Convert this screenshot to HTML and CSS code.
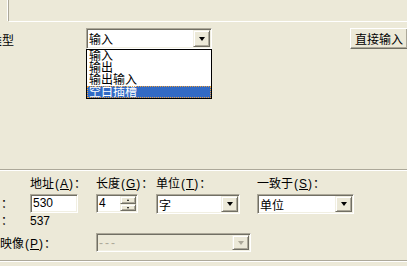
FILE: index.html
```html
<!DOCTYPE html>
<html lang="zh-CN">
<head>
<meta charset="utf-8">
<title>插槽属性</title>
<link rel="stylesheet" href="styles.css">
</head>
<body>
<div class="tabs"><div class="tab"></div><div class="tabline"></div></div>

<div class="row-type">
  <span class="lbl-type">类型</span>
  <div class="combo combo-type">
    <span class="combo-text">输入</span>
    <span class="dd-btn"><span class="arrow"></span></span>
    <ul class="dd-list">
      <li>输入</li>
      <li>输出</li>
      <li>输出输入</li>
      <li class="sel">空白插槽</li>
    </ul>
  </div>
  <div class="btn btn-direct">直接输入</div>
</div>

<div class="sep sep-mid"></div>

<div class="fields">
  <span></span>
  <span class="hdr">地址<span class="mn">(<u>A</u>)</span>：</span>
  <span class="hdr">长度<span class="mn">(<u>G</u>)</span>：</span>
  <span class="hdr">单位<span class="mn">(<u>T</u>)</span>：</span>
  <span class="hdr">一致于<span class="mn">(<u>S</u>)</span>：</span>

  <span class="colon">：</span>
  <div class="edit edit-addr">530</div>
  <div class="spin">
    <span class="spin-text">4</span>
    <span class="updown">
      <span class="ud ud-up"><span class="tri-up"></span></span>
      <span class="ud ud-down"><span class="tri-down"></span></span>
    </span>
  </div>
  <div class="combo combo-unit">
    <span class="combo-text">字</span>
    <span class="dd-btn"><span class="arrow"></span></span>
  </div>
  <div class="combo combo-match">
    <span class="combo-text">单位</span>
    <span class="dd-btn"><span class="arrow"></span></span>
  </div>

  <span class="colon">：</span>
  <span class="value">537</span>
</div>

<div class="row-map">
  <span class="lbl-map">映像<span class="mn">(<u>P</u>)</span>：</span>
  <div class="combo combo-map disabled">
    <span class="combo-text dashes">---</span>
    <span class="dd-btn"><span class="arrow"></span></span>
  </div>
</div>

<div class="sep sep-bottom"></div>
</body>
</html>
```

FILE: styles.css
```css
* {
  box-sizing: border-box;
}

html,
body {
  margin: 0;
  padding: 0;
}

body {
  width: 407px;
  height: 266px;
  overflow: hidden;
  background: #ECE9D8;
  color: #000;
  font-family: "Liberation Sans", "Noto Sans CJK SC", sans-serif;
  font-size: 12px;
}

/* tab strip */
.tabs {
  display: flex;
  height: 22px;
}

.tab {
  width: 9px;
  height: 21px;
  border-right: 1px solid #ACA899;
  box-shadow: inset -1px 0 #fff;
}

.tabline {
  flex: 1;
  height: 22px;
  border-bottom: 1px solid #fff;
}

/* type row */
.row-type {
  display: flex;
  align-items: center;
  height: 21px;
  margin-top: 6px;
}

.lbl-type {
  flex-shrink: 0;
  width: 96px;
  margin-left: -10px;
  padding-top: 2px;
  white-space: nowrap;
}

/* combo box */
.combo {
  position: relative;
  display: flex;
  flex-shrink: 0;
  height: 20px;
  padding: 1px;
  background: #fff;
  border: 1px solid;
  border-color: #ACA899 #fff #fff #ACA899;
  box-shadow: inset 1px 1px #716F64, inset -1px -1px #F1EFE2;
}

.combo-type {
  width: 126px;
  height: 21px;
}

.combo-unit {
  width: 84px;
}

.combo-match {
  width: 97px;
}

.combo-map {
  width: 155px;
  height: 19px;
}

.combo.disabled {
  background: #ECE9D8;
}

.combo-text {
  flex: 1;
  display: flex;
  align-items: center;
  padding-left: 1px;
  white-space: nowrap;
  overflow: hidden;
}

.dashes {
  color: #ACA899;
  letter-spacing: 2px;
}

.dd-btn {
  display: flex;
  align-items: center;
  justify-content: center;
  width: 17px;
  background: #ECE9D8;
  border: 1px solid;
  border-color: #F1EFE2 #716F64 #716F64 #F1EFE2;
  box-shadow: inset 1px 1px #fff, inset -1px -1px #ACA899;
}

.arrow {
  width: 1px;
  height: 0;
  border-top: 4px solid #000;
  border-left: 3px solid transparent;
  border-right: 3px solid transparent;
}

.disabled .arrow {
  border-top-color: #ACA899;
}

/* dropdown list */
.dd-list {
  position: absolute;
  left: -1px;
  top: calc(100% + 1px);
  z-index: 2;
  width: 126px;
  margin: 0;
  padding: 0;
  list-style: none;
  background: #fff;
  border: 1px solid #000;
}

.dd-list li {
  height: 12px;
  padding-left: 2px;
  line-height: 12px;
  white-space: nowrap;
}

.dd-list li.sel {
  background: #316AC5;
  color: #fff;
  outline: 1px dotted #E8A040;
  outline-offset: -1px;
}

/* push button */
.btn {
  display: flex;
  align-items: center;
  justify-content: center;
  flex-shrink: 0;
  background: #ECE9D8;
  border: 1px solid;
  border-color: #fff #716F64 #716F64 #fff;
  box-shadow: inset -1px -1px #ACA899;
  white-space: nowrap;
}

.btn-direct {
  width: 58px;
  height: 21px;
  margin-left: 138px;
}

/* separators */
.sep {
  height: 2px;
  border-top: 1px solid #ACA899;
  border-bottom: 1px solid #fff;
}

.sep-mid {
  margin-top: 120px;
}

.sep-bottom {
  margin-top: 8px;
}

/* field grid */
.fields {
  display: grid;
  grid-template-columns: 30px 66px 60px 101px 1fr;
  grid-template-rows: 17px 20px 14px;
  margin-top: 6px;
}

.hdr {
  align-self: start;
  line-height: 14px;
  white-space: nowrap;
}

.mn {
  letter-spacing: 1px;
  padding-left: 1px;
}

.colon {
  line-height: 14px;
  padding-left: 1px;
  align-self: center;
}

.value {
  line-height: 14px;
  align-self: center;
}

.edit {
  align-self: start;
  height: 19px;
  padding: 1px 2px;
  background: #fff;
  border: 1px solid;
  border-color: #ACA899 #fff #fff #ACA899;
  box-shadow: inset 1px 1px #716F64, inset -1px -1px #F1EFE2;
  line-height: 15px;
}

.edit-addr {
  width: 48px;
}

.spin {
  align-self: start;
  display: flex;
  width: 42px;
  height: 19px;
  padding: 1px;
  background: #fff;
  border: 1px solid;
  border-color: #ACA899 #fff #fff #ACA899;
  box-shadow: inset 1px 1px #716F64, inset -1px -1px #F1EFE2;
}

.spin-text {
  flex: 1;
  padding-left: 1px;
  line-height: 15px;
}

.updown {
  display: flex;
  flex-direction: column;
  width: 16px;
}

.ud {
  display: flex;
  align-items: center;
  justify-content: center;
  background: #ECE9D8;
  border: 1px solid;
  border-color: #F1EFE2 #716F64 #716F64 #F1EFE2;
  box-shadow: inset 1px 1px #fff, inset -1px -1px #ACA899;
}

.ud-up {
  height: 8px;
}

.ud-down {
  height: 7px;
}

.tri-up {
  width: 1px;
  height: 0;
  border-bottom: 2px solid #000;
  border-left: 1px solid transparent;
  border-right: 1px solid transparent;
}

.tri-down {
  width: 1px;
  height: 0;
  border-top: 2px solid #000;
  border-left: 1px solid transparent;
  border-right: 1px solid transparent;
}

/* mapping row */
.row-map {
  display: flex;
  align-items: center;
  height: 19px;
  margin-top: 5px;
}

.lbl-map {
  flex-shrink: 0;
  width: 96px;
  white-space: nowrap;
}
```
